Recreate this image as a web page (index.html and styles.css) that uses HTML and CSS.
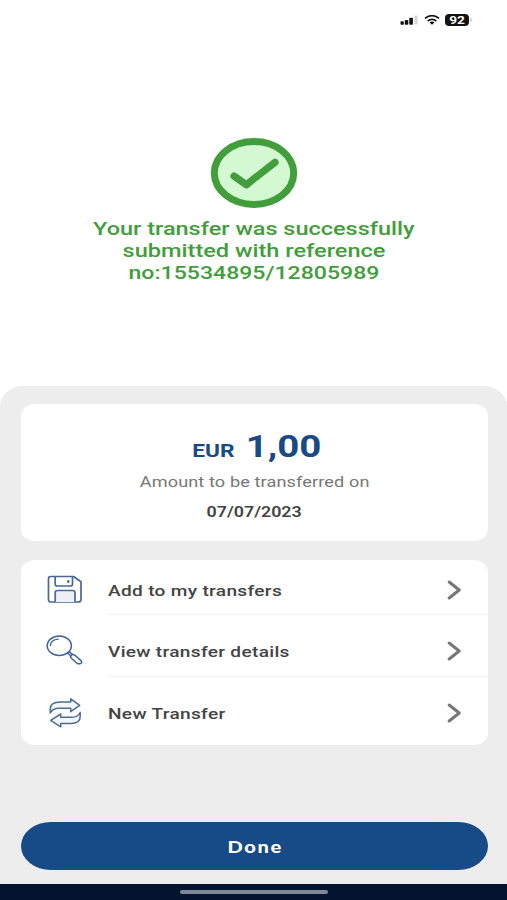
FILE: index.html
```html
<!DOCTYPE html>
<html lang="en">
<head>
<meta charset="utf-8">
<title>Transfer submitted</title>
<link rel="stylesheet" href="styles.css">
</head>
<body>
<main class="screen">
  <header class="status">
    <svg class="signal" width="18" height="10" viewBox="0 0 18 10"><rect x="0.5" y="6.3" width="3.3" height="3.4" rx=".8"/><rect x="4.8" y="5" width="3.5" height="4.7" rx=".8"/><rect x="9.3" y="2.8" width="3.6" height="6.9" rx=".8"/><rect x="14.3" y="0.5" width="3.2" height="9" rx=".8" fill="#d8d8d8"/></svg>
    <svg class="wifi" width="16" height="10" viewBox="0 0 16 10"><path d="M1 3.4Q8-2 15 3.4M3.7 6Q8 2.7 12.3 6" fill="none" stroke="#111" stroke-width="1.8"/><path d="M5.6 7.4Q8 5.8 10.4 7.4L8 9.7Z"/></svg>
    <span class="battery"><span class="level">92</span></span><i class="cap"></i>
  </header>
  <section class="result">
    <svg class="check" width="88" height="70" viewBox="0 0 88 70"><ellipse cx="44" cy="35" rx="39.7" ry="31.5" fill="#d3f8d2" stroke="#419e3b" stroke-width="7"/><path d="M24 38L36.3 46.8L65 24.3" fill="none" stroke="#419e3b" stroke-width="7.2" stroke-linecap="round" stroke-linejoin="round"/></svg>
    <h1 class="message"><span class="wide m1">Your transfer was successfully</span><span class="wide m2">submitted with reference</span><span class="wide m3">no:15534895/12805989</span></h1>
  </section>
  <section class="panel">
    <div class="card summary">
      <div class="amount"><span class="wide currency">EUR</span><span class="wide value">1,00</span></div>
      <div class="caption"><span class="wide">Amount to be transferred on</span></div>
      <div class="date"><span class="wide">07/07/2023</span></div>
    </div>
    <nav class="card actions">
      <a class="row">
        <svg class="icon" width="40" height="36" viewBox="0 0 40 36"><g fill="none" stroke="#4b6796" stroke-width="1.7" stroke-linejoin="round"><path d="M6.5 5.5H29.5L37 10.8V28.5Q37 31 34 31H7Q4.5 31 4.5 28.5V8Q4.5 5.5 6.5 5.5Z"/><path d="M11.2 5.5V13.3Q11.2 15 13.5 15H26Q28.5 15 28.5 13.3V5.5"/><path d="M11.2 31V21.5Q11.2 19.5 13.5 19.5H28.5Q31 19.5 31 21.5V31" fill="#edf0f5"/><path d="M24.3 9V12" stroke-width="2"/></g></svg>
        <span class="label"><span class="wide">Add to my transfers</span></span>
        <svg class="chevron" width="15" height="20" viewBox="0 0 15 20"><path d="M2.2 2L12.2 10L2.2 18"/></svg>
      </a>
      <a class="row">
        <svg class="icon" width="40" height="36" viewBox="0 0 40 36"><g fill="none" stroke="#3e649b" stroke-width="1.5" stroke-linejoin="round" stroke-linecap="round"><ellipse cx="15.3" cy="12.8" rx="12.1" ry="9.7"/><path d="M6.3 12.6Q7 6.8 14.2 6.2" stroke-width="1.2"/><path d="M23.4 20L27 23M25.3 18.6L28.3 21.4"/><path d="M27.5 22Q29 20.8 31.5 22.8L36.8 27.4Q38.7 29.4 36.8 30.4Q34.8 31.5 32.4 29.8L27.3 25.2Q25.5 23.2 27.5 22Z"/></g></svg>
        <span class="label"><span class="wide">View transfer details</span></span>
        <svg class="chevron" width="15" height="20" viewBox="0 0 15 20"><path d="M2.2 2L12.2 10L2.2 18"/></svg>
      </a>
      <a class="row">
        <svg class="icon" width="40" height="36" viewBox="0 0 40 36"><g fill="#f2f7fc" stroke="#4f6c92" stroke-width="1.5" stroke-linejoin="round"><path d="M6.3 18V14Q6.3 7 16 7H26.7V3.8L35.7 10.3L26.7 16.7V13.3H15Q9 13.3 6.3 18Z"/><path d="M36.2 17.5V21.5Q36.2 28.5 27 28.5H16.7V31.8L6.7 25.4L16.7 19V22.3H28Q33.5 22.3 36.2 17.5Z"/></g></svg>
        <span class="label"><span class="wide">New Transfer</span></span>
        <svg class="chevron" width="15" height="20" viewBox="0 0 15 20"><path d="M2.2 2L12.2 10L2.2 18"/></svg>
      </a>
    </nav>
    <button class="done"><span class="wide">Done</span></button>
  </section>
  <footer class="homebar"><i></i></footer>
</main>
</body>
</html>
```
FILE: styles.css
```css
* { box-sizing: border-box; }
body { margin: 0; background: #fff; font-family: Roboto, "Liberation Sans", sans-serif; }
.screen { width: 507px; height: 900px; display: flex; flex-direction: column; overflow: hidden; }

.status { height: 138px; padding: 14px 35px 0 0; display: flex; justify-content: flex-end; align-items: flex-start; }
.signal { margin: 1px 6px 0 0; fill: #111; }
.wifi { margin: 1px 5px 0 0; fill: #111; }
.battery { width: 24px; height: 12px; border-radius: 4px; background: #111; color: #fff; font-size: 10.5px; font-weight: 700; line-height: 13px; text-align: center; }
.level { display: inline-block; transform: scaleX(1.3); }
.cap { width: 2px; height: 4px; margin: 4px 0 0 1px; border-radius: 0 2px 2px 0; background: #ccc; }

.wide { display: inline-block; white-space: nowrap; transform: scaleX(1.24); }

.result { height: 248px; display: flex; flex-direction: column; align-items: center; }
.check { display: block; }
.message { margin: 10px 0 0; display: flex; flex-direction: column; align-items: center; color: #419e3b; font-size: 19px; font-weight: 500; line-height: 22px; }
.m1 { transform: translateX(0.7px) scaleX(1.235); }
.m3 { transform: translateX(0.7px) scaleX(1.215); }

.panel { height: 498px; padding: 18px 19px 0 21px; display: flex; flex-direction: column; background: #ededed; border-radius: 24px 24px 0 0 / 20px 20px 0 0; }
.card { background: #fff; border-radius: 14px / 12px; }
.summary { height: 137px; padding-top: 25px; display: flex; flex-direction: column; align-items: center; }
.amount { height: 36px; display: flex; align-items: baseline; gap: 23px; color: #174a86; font-weight: 700; line-height: 36px; }
.currency { font-size: 18px; transform: translateX(0.7px) scaleX(1.26); }
.value { font-size: 31px; transform: translateX(1px) scaleX(1.24); }
.caption { margin-top: 7px; height: 20px; line-height: 20px; font-size: 14.6px; letter-spacing: 0.1px; color: #777; }
.date { margin-top: 10px; height: 20px; line-height: 20px; font-size: 14.7px; font-weight: 600; color: #444; }
.date .wide { transform: scaleX(1.215); }

.actions { height: 185px; margin-top: 19px; }
.row { position: relative; height: 62px; padding-left: 23px; display: flex; align-items: center; }
.icon { flex: none; margin: 10px 24px 0 0; }
.label { flex: 1; height: 62px; line-height: 75px; border-bottom: 1.5px solid #f1f1f1; color: #444; font-size: 15.4px; font-weight: 500; letter-spacing: 0.25px; }
.label .wide { transform-origin: left; }
.chevron { position: absolute; right: 26px; top: 26px; fill: none; stroke: #777; stroke-width: 3; stroke-linecap: round; stroke-linejoin: round; }
.row:first-child, .row:first-child .label { height: 55px; }
.row:first-child .label { line-height: 62px; }
.row:first-child .icon { margin-top: 3px; }
.row:first-child .chevron { top: 20px; }
.row:last-child .label { border: 0; }

.done { height: 48px; margin: 77px 0 0; padding: 0; border: 0; border-radius: 30px / 24px; background: #174b87; color: #fff; font: 900 17px/49px Lato, sans-serif; letter-spacing: 1.4px; }
.done .wide { transform: translateX(0.7px) scaleX(1.18); }

.homebar { height: 16px; padding-top: 6px; background: #03142f; display: flex; justify-content: center; }
.homebar i { width: 148px; height: 4px; border-radius: 2px; background: #7d8798; }
```
